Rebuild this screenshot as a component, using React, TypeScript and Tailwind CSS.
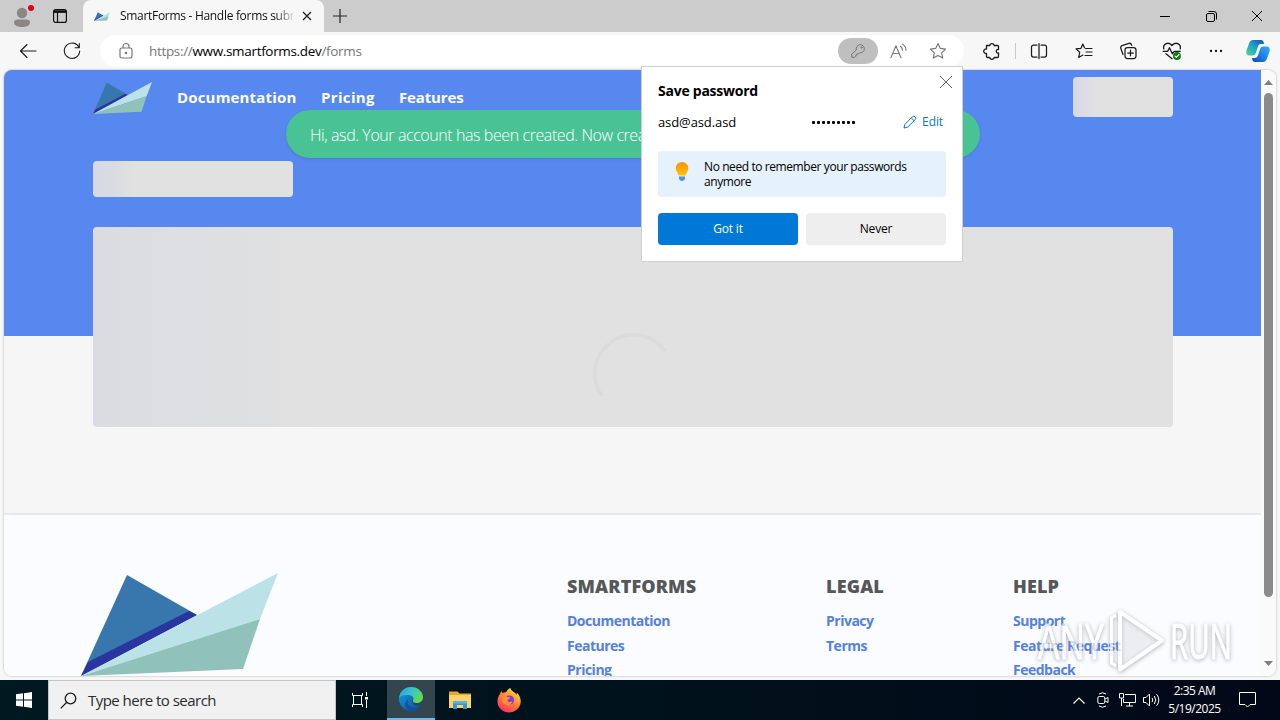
import type { ReactNode } from "react";

interface IconProps {
  size?: number;
  className?: string;
  children: ReactNode;
}

function Icon({ size = 20, className = "", children }: IconProps) {
  return (
    <svg
      width={size}
      height={size}
      viewBox="0 0 20 20"
      fill="none"
      stroke="currentColor"
      strokeWidth="1.1"
      strokeLinecap="round"
      strokeLinejoin="round"
      className={`shrink-0 ${className}`}
    >
      {children}
    </svg>
  );
}

function Slot({ className = "w-11", children }: { className?: string; children: ReactNode }) {
  return <div className={`flex h-full shrink-0 items-center justify-center ${className}`}>{children}</div>;
}

function Logo({ className }: { className: string }) {
  return (
    <svg viewBox="0 0 197 103" preserveAspectRatio="none" className={className}>
      <path d="M0 103 46 2 116 42Z" fill="#3876ae" />
      <path d="M0 103 7 89 108 38 116 42Z" fill="#2a35a0" />
      <path d="M0 103 197 0 179 46Z" fill="#bbe2e6" />
      <path d="M0 103 179 46 162 96Z" fill="#90c1bb" />
    </svg>
  );
}

function TabStrip() {
  return (
    <div className="flex h-8 shrink-0 bg-[#cccccc]">
      <Slot className="w-11">
        <svg width="24" height="26" viewBox="0 0 24 26">
          <circle cx="12" cy="10" r="5.2" fill="#8a8683" />
          <path d="M4 19.5c0-2 1.6-3 3.4-3h9.2c1.8 0 3.4 1 3.4 3 0 3-3.6 4.5-8 4.5s-8-1.5-8-4.5Z" fill="#8a8683" />
          <circle cx="21" cy="5" r="3" fill="#e2001a" />
        </svg>
      </Slot>
      <Slot className="w-8">
        <svg width="16" height="16" viewBox="0 0 16 16" fill="none" stroke="#111">
          <rect x="1.6" y="1.6" width="12.8" height="12.8" rx="2" strokeWidth="1.2" />
          <path d="M2 3.6h12" strokeWidth="2.6" />
          <path d="M5.5 4v10" strokeWidth="1.2" />
        </svg>
      </Slot>
      <div className="ml-[7px] flex w-[241px] items-center rounded-t-lg bg-[#f7f7f7] pl-[11px]">
        <Logo className="h-[9px] w-4 shrink-0" />
        <div className="ml-2.5 w-[173px] overflow-hidden text-[12px] tracking-[-0.3px] whitespace-nowrap text-[#111] [mask-image:linear-gradient(to_right,black_155px,transparent_176px)]">
          SmartForms - Handle forms submissions
        </div>
        <svg width="10" height="10" viewBox="0 0 10 10" stroke="#222" strokeWidth="1.3" className="ml-[9px] shrink-0">
          <path d="m1 1 8 8M9 1 1 9" />
        </svg>
      </div>
      <Slot className="w-8">
        <svg width="14" height="14" viewBox="0 0 14 14" stroke="#222" strokeWidth="1.2">
          <path d="M7 0v14M0 7h14" />
        </svg>
      </Slot>
      <div className="ml-auto flex text-black">
        <Slot className="w-[46px]">
          <div className="h-px w-2.5 bg-black" />
        </Slot>
        <Slot className="w-[46px]">
          <svg width="11" height="11" viewBox="0 0 11 11" fill="none" stroke="currentColor">
            <rect x=".5" y="2.5" width="8" height="8" rx="1.5" />
            <path d="M2.5.5H8A2.5 2.5 0 0 1 10.5 3v5.5" />
          </svg>
        </Slot>
        <Slot className="w-[46px]">
          <svg width="10" height="10" viewBox="0 0 10 10" stroke="currentColor">
            <path d="m0 0 10 10M10 0 0 10" />
          </svg>
        </Slot>
      </div>
    </div>
  );
}

function AddressBar() {
  return (
    <div className="ml-1.5 flex h-8 w-[864px] shrink-0 items-center rounded-full bg-white pl-[18px] text-[#767676]">
      <svg width="16" height="18" viewBox="0 0 16 18" fill="none" stroke="currentColor" strokeWidth="1.2">
        <rect x="2" y="6" width="12" height="10" rx="1.8" />
        <path d="M5 6V4.5a3 3 0 0 1 6 0V6" />
        <circle cx="8" cy="11" r=".7" fill="currentColor" />
      </svg>
      <div className="ml-[15px] text-[13.5px] tracking-[-0.33px]">
        https://<span className="text-black">www.smartforms.dev</span>/forms
      </div>
      <div className="ml-auto flex h-full items-center pr-1.5">
        <div className="flex h-[26px] w-10 items-center justify-center rounded-full bg-[#bfbfbf]">
          <Icon size={18} className="text-[#777]">
            <path d="M8 8.5a4.6 4.6 0 1 1 3.5 3.5L10.5 13H9v1.5H7.5V16l-1 1H3v-3.2Z" />
            <circle cx="14" cy="6" r=".7" />
          </Icon>
        </div>
        <Slot className="w-10">
          <Icon size={19}>
            <path d="M2 16.5 7.3 4 12.6 16.5M4 12h6.7M12 4.5a5 5 0 0 1 2.2 4.5M14.3 2.2a8 8 0 0 1 3.6 6.6" />
          </Icon>
        </Slot>
        <Slot className="w-10">
          <Icon>
            <path d="m10 2.5 2.3 4.9 5.3.7-3.9 3.7 1 5.3L10 14.5l-4.7 2.6 1-5.3-3.9-3.7 5.3-.7Z" />
          </Icon>
        </Slot>
      </div>
    </div>
  );
}

function Toolbar() {
  return (
    <div className="flex h-[38px] shrink-0 items-center bg-[#f7f7f7] pl-1.5 text-[#1b1b1b]">
      <Slot>
        <Icon>
          <path d="M18 10H2.5M9 3.5 2.5 10 9 16.5" />
        </Icon>
      </Slot>
      <Slot>
        <Icon>
          <path d="M17 6.5A7.7 7.7 0 1 0 17.7 10M17.3 2.5v4.2h-4.2" />
        </Icon>
      </Slot>
      <AddressBar />
      <Slot className="ml-1.5 w-11">
        <Icon>
          <path
            d="M4.5 4.5h3.2a2.3 2.3 0 0 1 4.5 0h3.3a1 1 0 0 1 1 1v3a1.8 1.8 0 1 0 0 3.5v3.5a1 1 0 0 1-1 1h-3.3a2.3 2.3 0 0 1-4.5 0H5.5a1 1 0 0 1-1-1V12.5a2.3 2.3 0 1 1 0-4.5Z"
            strokeWidth="1.3"
          />
        </Icon>
      </Slot>
      <div className="ml-px h-4 w-px bg-[#c8c8c8]" />
      <Slot className="ml-px w-11">
        <Icon>
          <path d="M8 4H4.5a2 2 0 0 0-2 2v8a2 2 0 0 0 2 2H8M12 4h3.5a2 2 0 0 1 2 2v8a2 2 0 0 1-2 2H12M10 2.5v15" strokeWidth="1.25" />
        </Icon>
      </Slot>
      <Slot className="w-[45px]">
        <Icon>
          <path d="M10.5 6.8 8.8 3 7 7.3l-5 .6 3.7 3.4-1 5.2 4.2-2.4M11.5 7.5H18M12 11h6M11 14.5h7" strokeWidth="1.2" />
        </Icon>
      </Slot>
      <Slot>
        <Icon>
          <rect x="7" y="6.5" width="11" height="11" rx="2.5" strokeWidth="1.25" />
          <path d="M12.5 9.2v5.6M9.7 12h5.6M5 13.5 2.8 7.3a2 2 0 0 1 1.2-2.6l7-2.3a2 2 0 0 1 2.5 1.3l.2.7" strokeWidth="1.25" />
        </Icon>
      </Slot>
      <Slot>
        <Icon size={22}>
          <path
            d="M2.5 8C1.5 3.5 7 1 10 5c3-4 8.5-1.5 7.5 3M4.5 12.5 10 17M2 10.3h4L7.7 7l2.6 5.5 1.7-2.2h5.5"
            strokeWidth="1.2"
          />
          <circle cx="14.5" cy="14.5" r="3.6" fill="#0e7a0d" stroke="none" />
          <path d="m12.8 14.6 1.2 1.2 2.3-2.5" stroke="white" />
        </Icon>
      </Slot>
      <Slot>
        <svg width="14" height="4" viewBox="0 0 14 4" fill="#111">
          <circle cx="2" cy="2" r="1.15" />
          <circle cx="7" cy="2" r="1.15" />
          <circle cx="12" cy="2" r="1.15" />
        </svg>
      </Slot>
      <Slot className="w-10">
        <svg width="24" height="24" viewBox="0 0 24 24">
          <defs>
            <linearGradient id="copilot-left" x1="0" y1="1" x2="1" y2="0">
              <stop offset="0" stopColor="#5bd48f" />
              <stop offset=".45" stopColor="#1fa9c4" />
              <stop offset="1" stopColor="#1250c4" />
            </linearGradient>
            <linearGradient id="copilot-right" x1="1" y1="0" x2="0" y2="1">
              <stop offset="0" stopColor="#3aa9f2" />
              <stop offset=".5" stopColor="#1b82e8" />
              <stop offset="1" stopColor="#1246b0" />
            </linearGradient>
          </defs>
          <path d="M7 1h8c2 0 2.5 1.5 3 4h-3c-2 0-2.6 1-3.2 3l-2 6c-.6 1.8-1.5 2.5-3.3 2.5H3C.5 16.5-.2 14 .5 11.5l2.5-7C3.8 2.2 5 1 7 1Z" fill="url(#copilot-left)" />
          <path d="M17 23H9c-2 0-2.5-1.5-3-4h2.5c2 0 3-1 3.6-3l2-6c.6-1.8 1.6-2.5 3.4-2.5H21c2.5 0 3.2 2.5 2.5 5l-2.5 7c-.8 2.3-2 3.5-4 3.5Z" fill="url(#copilot-right)" />
        </svg>
      </Slot>
    </div>
  );
}

const navLinks = [
  { label: "Documentation", className: "w-[120px] tracking-[0.17px]" },
  { label: "Pricing", className: "w-[54px] tracking-[0.35px]" },
  { label: "Features", className: "w-[64px] tracking-[-0.15px]" },
];

function Hero() {
  return (
    <main className="h-[443px] bg-[linear-gradient(to_bottom,#5788ef_266px,#f6f6f6_266px)] pt-[7px] pl-[89px]">
      <header className="flex h-10 w-[1080px] items-center">
        <Logo className="mt-0.5 h-8 w-[59px]" />
        <nav className="ml-[25px] flex gap-6 text-[15px] font-bold whitespace-nowrap text-white">
          {navLinks.map((link) => (
            <a key={link.label} className={link.className}>
              {link.label}
            </a>
          ))}
        </nav>
        <div className="ml-auto h-10 w-[100px] rounded bg-linear-to-r from-[#d7d8e6] to-[#e1e1e1] to-25%" />
      </header>
      <div className="mt-11 h-9 w-[200px] rounded bg-linear-to-r from-[#d6dae5] via-[#d8dbe2] via-10% to-[#e1e1e1] to-20%" />
      <div className="mt-[30px] flex h-[200px] w-[1080px] justify-center rounded bg-linear-to-r from-[#dadce1] to-[#e1e1e1] to-20% pt-[106px]">
        <svg width="80" height="80" viewBox="0 0 80 80" fill="none" stroke="#dbdbdb" strokeWidth="3.5">
          <path d="M72 18A38 38 0 0 0 9 63" />
        </svg>
      </div>
    </main>
  );
}

const footerColumns = [
  { title: "SMARTFORMS", links: ["Documentation", "Features", "Pricing"], className: "w-[259px]" },
  { title: "LEGAL", links: ["Privacy", "Terms"], className: "w-[187px]" },
  { title: "HELP", links: ["Support", "Feature Request", "Feedback"], className: "w-[180px]" },
];

function Footer() {
  return (
    <footer className="flex border-t-2 border-[#e4e9ef] bg-[#fafcff] pt-[57px] pl-[77px]">
      <Logo className="mt-px h-[103px] w-[197px] shrink-0" />
      <div className="ml-[289px] flex">
        {footerColumns.map((column) => (
          <div key={column.title} className={column.className}>
            <h3 className="text-[18px] leading-7 font-extrabold tracking-[0.15px] text-[#565759]">{column.title}</h3>
            <ul className="mt-[9px] text-[14px] leading-[24.5px] font-bold tracking-[-0.5px] text-[#5580dc]">
              {column.links.map((link) => (
                <li key={link}>{link}</li>
              ))}
            </ul>
          </div>
        ))}
      </div>
    </footer>
  );
}

function Scrollbar() {
  return (
    <div className="flex w-[15px] shrink-0 flex-col items-center bg-[#fafafa] pt-[10px]">
      <svg width="9" height="5" viewBox="0 0 9 5" fill="#7f7f7f">
        <path d="M0 5 4.5 0 9 5Z" />
      </svg>
      <div className="mt-2 h-[504px] w-[9px] rounded-full bg-[#8b8b8b]" />
      <svg width="9" height="5" viewBox="0 0 9 5" fill="#7f7f7f" className="mt-16">
        <path d="m0 0 4.5 5L9 0Z" />
      </svg>
    </div>
  );
}

function Toast() {
  return (
    <div className="absolute top-[110px] left-[286px] flex h-12 w-[694px] items-center rounded-full bg-[#49c394] pt-px pl-6 text-[16px] font-light tracking-[-0.42px] whitespace-nowrap text-white shadow">
      Hi, asd. Your account has been created. Now create
    </div>
  );
}

function SavePasswordPopup() {
  return (
    <div className="absolute top-[66px] left-[641px] h-[196px] w-[322px] border border-[#cfcfcf] bg-white px-4 text-black">
      <div className="flex h-9 items-start justify-between">
        <h2 className="mt-[14px] text-[14px] leading-5 font-bold tracking-[-0.25px]">Save password</h2>
        <svg width="12" height="12" viewBox="0 0 12 12" stroke="#666" className="mt-[9px] -mr-1.5 shrink-0">
          <path d="m0 0 12 12M12 0 0 12" />
        </svg>
      </div>
      <div className="mt-[9px] flex h-5 items-center">
        <span className="w-[154px] pt-0.5 text-[13px] tracking-[-0.1px]">asd@asd.asd</span>
        <span className="flex gap-[2px] pt-px">
          {Array.from({ length: 9 }, (_, i) => (
            <i key={i} className="size-[3px] rounded-[1px] bg-black" />
          ))}
        </span>
        <span className="ml-auto flex items-center pr-[3px] text-[12px] tracking-[-0.1px] text-[#0a78d0]">
          <svg width="14" height="14" viewBox="0 0 14 14" fill="none" stroke="currentColor" className="mr-[5px]">
            <path d="m1 13 .8-3.6 7.5-7.5a1.9 1.9 0 0 1 2.8 2.8l-7.5 7.5ZM8.3 3l2.7 2.7" />
          </svg>
          Edit
        </span>
      </div>
      <div className="mt-[19px] flex h-[46px] items-center rounded-sm bg-[#e5f1fb] pl-[17px]">
        <svg width="14" height="20" viewBox="0 0 14 20" className="mb-1 shrink-0">
          <defs>
            <linearGradient id="bulb" x1="0" y1="0" x2="0" y2="1">
              <stop offset="0" stopColor="#f58f12" />
              <stop offset="1" stopColor="#ffc400" />
            </linearGradient>
          </defs>
          <path d="M7 0a6.3 6.3 0 0 1 6.3 6.3c0 3-2.3 4.2-2.8 7.2h-7C3 10.500.7 9.300.7 6.3A6.3 6.3 0 0 1 7 0Z" fill="url(#bulb)" />
          <path d="M4 14.5h6v1.5c0 4-6 4-6 0Z" fill="#4f8ff0" />
        </svg>
        <p className="ml-[15px] text-[12px] leading-[15px] tracking-[-0.41px]">
          No need to remember your passwords
          <br />
          anymore
        </p>
      </div>
      <div className="mt-4 flex gap-2 text-[12px] tracking-[-0.2px]">
        <button className="h-8 w-[140px] rounded-sm bg-[#0078d7] text-white">Got it</button>
        <button className="h-8 w-[140px] rounded-sm bg-[#eeeeee]">Never</button>
      </div>
    </div>
  );
}

function Watermark() {
  return (
    <svg
      width="200"
      height="70"
      viewBox="0 0 200 70"
      className="absolute top-[606px] left-[1036px] opacity-70 drop-shadow-[0_1px_2px_#8c8c94]"
      fill="white"
      fontFamily="Open Sans"
      fontSize="49"
    >
      <text x="2" y="53" strokeWidth="1" stroke="white" textLength="66" lengthAdjust="spacingAndGlyphs">
        ANY
      </text>
      <text x="134" y="53" strokeWidth="1" stroke="white" textLength="62" lengthAdjust="spacingAndGlyphs">
        RUN
      </text>
      <path d="m84 6 42 28.5-42 29Z" stroke="white" strokeWidth="4" strokeLinejoin="round" fillOpacity=".25" />
      <path d="M80 9.5 75.5 12v45l4.5 3" fill="none" stroke="white" strokeWidth="3" />
    </svg>
  );
}

function EdgeIcon() {
  return (
    <svg width="24" height="24" viewBox="0 0 24 24">
      <defs>
        <linearGradient id="edge-top" x1="0" y1="0" x2="1" y2=".4">
          <stop offset="0" stopColor="#2a9fe0" />
          <stop offset=".5" stopColor="#35c1cf" />
          <stop offset="1" stopColor="#5fdb54" />
        </linearGradient>
        <linearGradient id="edge-body" x1="0" y1="0" x2="1" y2="1">
          <stop offset="0" stopColor="#1b9de0" />
          <stop offset="1" stopColor="#0b4a9c" />
        </linearGradient>
      </defs>
      <path d="M12 0a12 12 0 1 0 10.5 17.8c-5 2.2-9.5.2-9.5-4.3L24 11A12 12 0 0 0 12 0Z" fill="url(#edge-body)" />
      <path d="M0 11C1 4 6 0 12 0c7 0 12 5 12 10 0 4-3 6-6.5 6-3 0-4-1.3-3.5-2.3 2-3.7-2-6.2-5.5-5.7C4 8 1 9 0 11Z" fill="url(#edge-top)" />
      <path d="M9.5 12c-2.5 4 0 9 5.5 8.5 3 0 5.5-1 7.3-2.7-2.5 4.2-6.3 6.2-10.3 6.2-6-1-8-8-2.5-12Z" fill="#124f9f" />
    </svg>
  );
}

function ExplorerIcon() {
  return (
    <svg width="22" height="20" viewBox="0 0 22 20">
      <path d="M0 1.5h8.5l2 2H22V18H0Z" fill="#e8a92a" />
      <path d="M0 5h22v13H0Z" fill="#fbd667" />
      <path d="M4 19v-8h14v8h-4v-4H8v4Z" fill="#3c93d6" />
      <path d="M4 11h14v2.5H4Z" fill="#5cb3ea" />
    </svg>
  );
}

function FirefoxIcon() {
  return (
    <svg width="24" height="25" viewBox="0 0 24 25">
      <defs>
        <linearGradient id="fox" x1=".8" y1="0" x2=".2" y2="1">
          <stop offset="0" stopColor="#ffe14a" />
          <stop offset=".45" stopColor="#ff8a2b" />
          <stop offset="1" stopColor="#f4286e" />
        </linearGradient>
      </defs>
      <path d="M3 6c.3-1.5 1-2.5 1.5-3 .2 1 .6 1.5 1 2 1.5-.8 2.5-.9 3.5-.7C10 2 12 .5 13.5 0c0 3 5 4 6 7 .2-.8.2-1.5 0-2.5 3 2.5 4.5 6 4.2 9.5C23.2 20 18 24.5 12 24.5S.8 20 .5 14c-.1-3 .8-6 2.5-8Z" fill="url(#fox)" />
      <circle cx="12.5" cy="12" r="4.6" fill="#8137dd" />
      <path d="M5 8.5c2-1.2 4-.9 5.5.5l3 .5c-.5 1.5-2.5 1.7-3 2.7-.6 1.7 2.5 2.8 5 .8-1 6-9.5 5.5-10.5-.5Z" fill="#ff8f33" />
    </svg>
  );
}

function Taskbar() {
  return (
    <div className="mt-auto flex h-10 shrink-0 bg-linear-to-r from-[#001820] via-[#00121c] to-[#020818] text-white">
      <Slot className="w-12">
        <svg width="16" height="16" viewBox="0 0 16 16" fill="white">
          <path d="M0 2.3 7 1.3v6.3H0ZM8 1.2 16 0v7.6H8ZM0 8.5h7v6.3l-7-1ZM8 8.5h8V16l-8-1.2Z" />
        </svg>
      </Slot>
      <div className="flex w-72 items-center border border-[#c4c4c4] bg-[#f1f1f1] pl-[11px] text-[#2b2b2b]">
        <svg width="17" height="17" viewBox="0 0 17 17" fill="none" stroke="#1b1b1b" strokeWidth="1.3">
          <circle cx="10.5" cy="6.5" r="5.3" />
          <path d="M6.800 10.300.7 16.4" />
        </svg>
        <span className="ml-[11px] text-[15px] tracking-[-0.53px]">Type here to search</span>
      </div>
      <Slot className="w-12">
        <svg width="17" height="16" viewBox="0 0 17 16" fill="none" stroke="white">
          <path d="M.5 1v2.5h10V1M.5 15v-2.5h10V15M1.5 3.5v9M9.5 3.5v9M14.5 0v4M14.5 8v8" />
          <path d="M13 5h3v2.5h-3Z" fill="white" stroke="none" />
        </svg>
      </Slot>
      <Slot className="ml-[3px] w-12 border-b-2 border-[#76b5ea] bg-[#33464d]">
        <EdgeIcon />
      </Slot>
      <Slot className="w-[49px]">
        <ExplorerIcon />
      </Slot>
      <Slot className="w-[49px]">
        <FirefoxIcon />
      </Slot>
      <div className="ml-auto flex">
        <Slot className="w-6">
          <svg width="12" height="7" viewBox="0 0 12 7" fill="none" stroke="white" strokeWidth="1.2">
            <path d="m.5 6.5 5.5-5.5 5.5 5.5" />
          </svg>
        </Slot>
        <Slot className="w-6">
          <svg width="12" height="16" viewBox="0 0 12 16" fill="none" stroke="white">
            <rect x=".8" y="4.5" width="7" height="7" rx="1.5" />
            <path d="m8 7 3-1.5v5L8 9M2 2Q5.500-.5 9 2M2 14q3.5 2.5 7 0" />
          </svg>
        </Slot>
        <Slot className="w-6">
          <svg width="17" height="14" viewBox="0 0 17 14" fill="none" stroke="white">
            <path d="M6 1.5h10.5v8H4.500V6M.5.5h4V5h-4ZM2.5 5v8M7 13h7M10.5 9.500V13" />
          </svg>
        </Slot>
        <Slot className="w-6">
          <svg width="17" height="14" viewBox="0 0 17 14" fill="none" stroke="white">
            <path d="M.5 4.500h2.500L6.500 1v12L3 9.500H.5ZM9 4.800q1.5 2.200 0 4.400M11.300 3q3 4 0 8M13.600 1.200q4.500 5.800 0 11.600" />
          </svg>
        </Slot>
        <div className="flex w-[63px] flex-col items-center justify-center text-[12px] leading-[18px] tracking-[-0.5px]">
          <span>2:35 AM</span>
          <span>5/19/2025</span>
        </div>
        <Slot className="w-[42px]">
          <svg width="17" height="16" viewBox="0 0 17 16" fill="none" stroke="white">
            <path d="M.5.5h16v12H11L8.5 15 6 12.5H.5Z" />
          </svg>
        </Slot>
        <div className="w-3" />
      </div>
    </div>
  );
}

export default function App() {
  return (
    <div className="relative flex h-[720px] w-[1280px] flex-col overflow-hidden bg-[#f7f7f7] font-['Open_Sans','Noto_Sans',sans-serif]">
      <TabStrip />
      <Toolbar />
      <div className="mx-1 flex h-[606px] shrink-0 overflow-hidden rounded-lg shadow-[0_0_2px_#999]">
        <div className="w-[1257px] shrink-0 overflow-hidden">
          <Hero />
          <Footer />
        </div>
        <Scrollbar />
      </div>
      <Taskbar />
      <Toast />
      <SavePasswordPopup />
      <Watermark />
    </div>
  );
}
